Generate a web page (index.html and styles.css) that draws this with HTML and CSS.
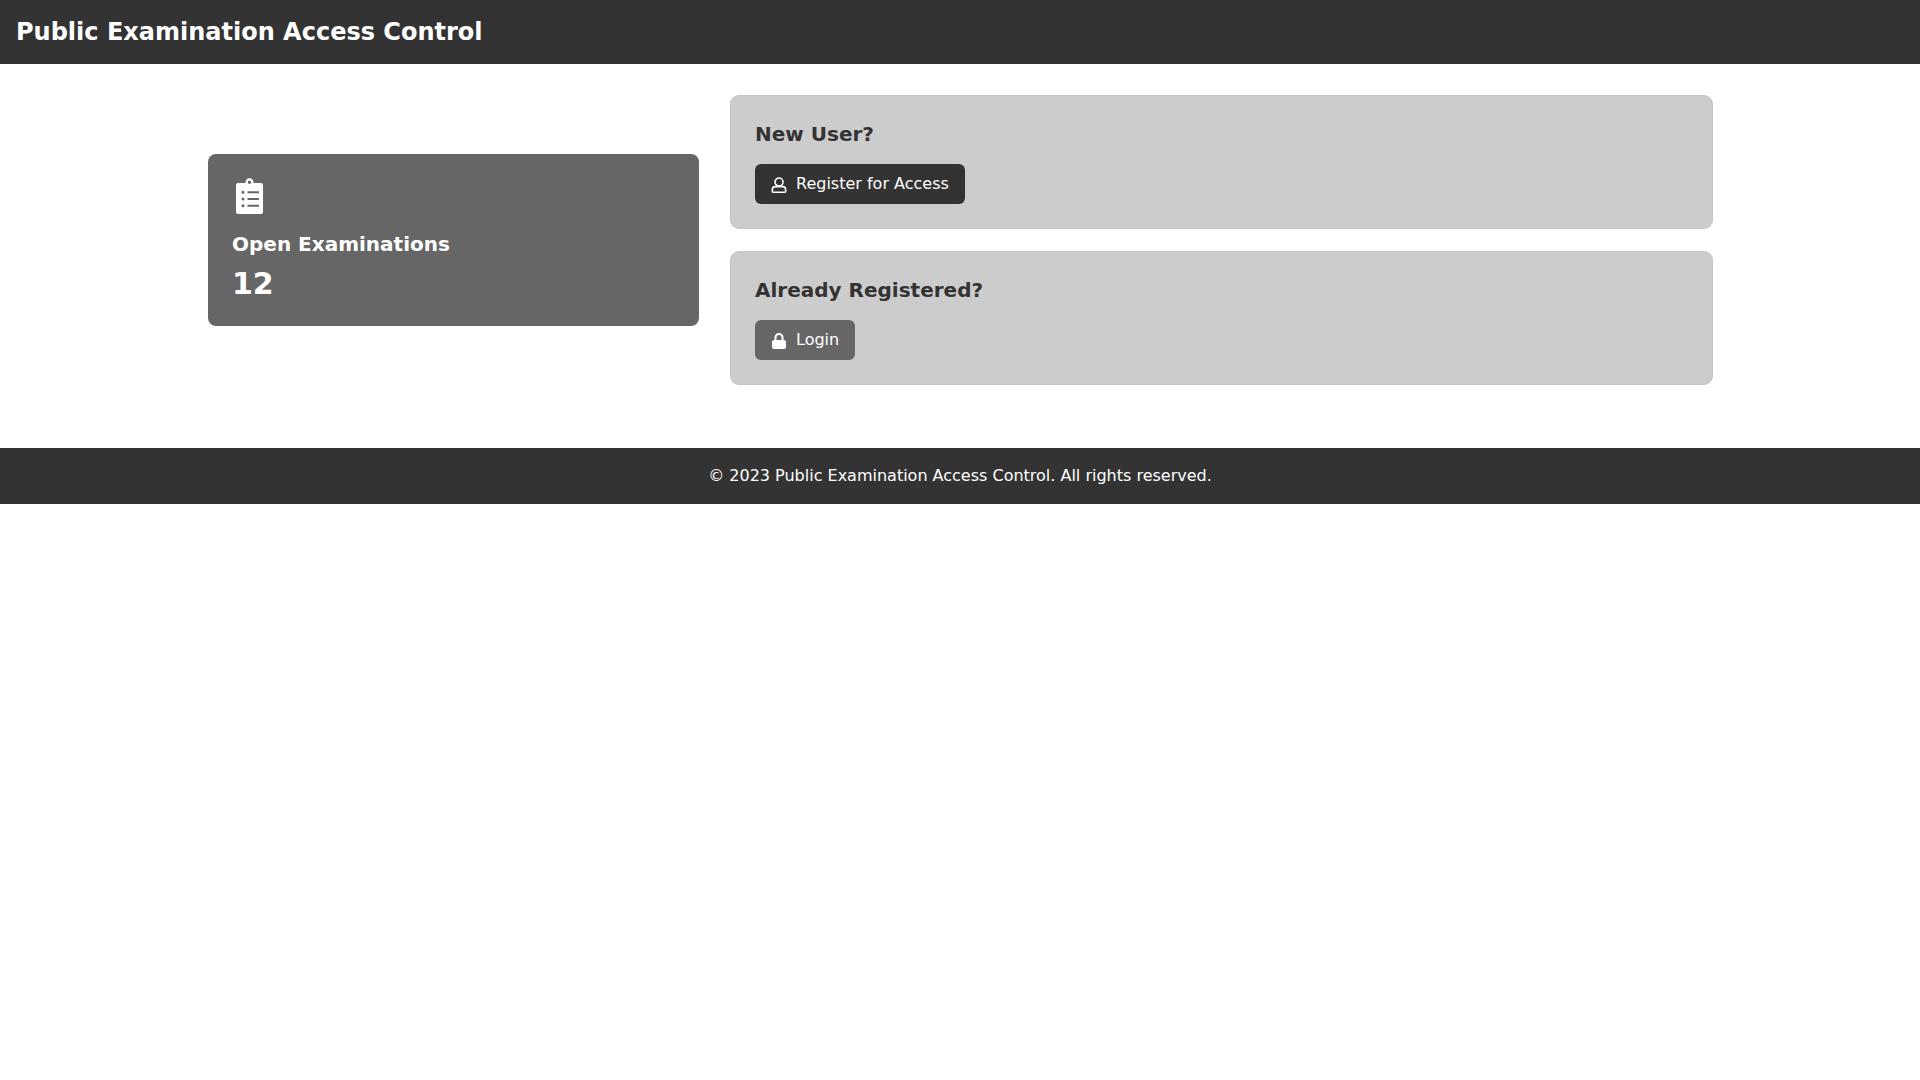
FILE: index.html
```html
<!DOCTYPE html>
<html lang="en">
<head>
    <meta charset="UTF-8">
    <meta name="viewport" content="width=device-width, initial-scale=1.0">
    <title>Public Examination Access Control</title>
    <link rel="stylesheet" href="styles.css">
</head>
<body>
    <header class="site-header">
        <h1>Public Examination Access Control</h1>
    </header>

    <main class="content">
        <section class="stat-card">
            <div class="stat-icon-box">
                <svg class="stat-icon" viewBox="0 0 27 36" aria-hidden="true">
                    <path fill-rule="evenodd" d="M2 5H9.580A4 4 0 1 1 17.420 5H25a2 2 0 0 1 2 2V34a2 2 0 0 1-2 2H2a2 2 0 0 1-2-2V7a2 2 0 0 1 2-2zM13.500 2.500a1.700 1.700 0 1 0 0 3.400 1.700 1.700 0 0 0 0-3.400zM7 12.800a1.500 1.500 0 1 0 0 3 1.500 1.500 0 0 0 0-3zM7 19.500a1.500 1.500 0 1 0 0 3 1.500 1.500 0 0 0 0-3zM7 26.200a1.500 1.500 0 1 0 0 3 1.500 1.500 0 0 0 0-3zM11.500 13.300v2H23v-2zM11.500 20v2H23v-2zM11.500 26.700v2H23v-2z"/>
                </svg>
            </div>
            <h3>Open Examinations</h3>
            <p class="stat-value">12</p>
        </section>

        <div class="actions">
            <section class="action-card">
                <h2>New User?</h2>
                <a class="btn btn-dark" href="#">
                    <svg class="btn-icon btn-icon-line" viewBox="0 0 14 15" aria-hidden="true">
                        <circle cx="7" cy="4.750" r="3.750"/>
                        <path d="M3.500 9h7c1.900 0 2.750 1.500 2.750 3v1.250q0 1-1 1H1.750q-1 0-1-1V12c0-1.500.85-3 2.750-3z"/>
                    </svg>
                    Register for Access
                </a>
            </section>
            <section class="action-card">
                <h2>Already Registered?</h2>
                <a class="btn btn-grey" href="#">
                    <svg class="btn-icon" viewBox="0 0 14 16" aria-hidden="true">
                        <path fill-rule="evenodd" d="M7 0a4.500 4.500 0 0 1 4.500 4.500V7H12a2 2 0 0 1 2 2v5a2 2 0 0 1-2 2H2a2 2 0 0 1-2-2V9a2 2 0 0 1 2-2h.5V4.500A4.500 4.500 0 0 1 7 0zm0 2a2.500 2.500 0 0 0-2.500 2.500V7h5V4.500A2.500 2.500 0 0 0 7 2z"/>
                    </svg>
                    Login
                </a>
            </section>
        </div>
    </main>

    <footer class="site-footer">
        &copy; 2023 Public Examination Access Control. All rights reserved.
    </footer>
</body>
</html>
```

FILE: styles.css
```css
body {
    font-family: "DejaVu Sans", sans-serif;
    margin: 0;
    background-color: #fff;
    color: #333;
    line-height: 24px;
}
.site-header {
    background-color: #333;
    color: #fff;
    padding: 16px;
}
.site-header h1 {
    font-size: 24px;
    line-height: 32px;
    font-weight: 700;
    margin: 0;
}
.content {
    max-width: 1504px;
    margin: 0 auto;
    padding: 32px 0 64px;
    display: grid;
    grid-template-columns: 491px 1fr;
    gap: 32px;
    align-items: center;
}
.stat-card {
    background-color: #666;
    color: #fff;
    border-radius: 8px;
    padding: 24px;
}
.stat-icon-box {
    height: 40px;
    margin-bottom: 12px;
}
.stat-icon {
    display: block;
    width: 27px;
    height: 36px;
    margin-left: 4px;
    fill: #fff;
}
.stat-card h3 {
    font-size: 20px;
    line-height: 28px;
    font-weight: 700;
    margin: 0 0 8px;
}
.stat-value {
    font-size: 30px;
    line-height: 36px;
    font-weight: 700;
    margin: 0;
}
.actions {
    display: flex;
    flex-direction: column;
    gap: 24px;
}
.action-card {
    background-color: #ccc;
    border-radius: 8px;
    padding: 24px;
    box-shadow: 0 0 0 1px #c4c4c4;
}
.action-card h2 {
    font-size: 20px;
    line-height: 28px;
    font-weight: 700;
    margin: 0 0 16px;
}
.btn {
    display: inline-flex;
    align-items: center;
    gap: 9px;
    height: 40px;
    padding: 0 16px;
    border-radius: 6px;
    color: #fff;
    font-size: 16px;
    text-decoration: none;
}
.btn-dark {
    background-color: #333;
}
.btn-grey {
    background-color: #666;
}
.btn-icon {
    width: 16px;
    height: 16px;
    margin-top: 2px;
    fill: #fff;
}
.btn-icon-line {
    fill: none;
    stroke: #fff;
    stroke-width: 1.5;
}
.site-footer {
    background-color: #333;
    color: #fff;
    padding: 16px;
    text-align: center;
    font-size: 16px;
}
```
